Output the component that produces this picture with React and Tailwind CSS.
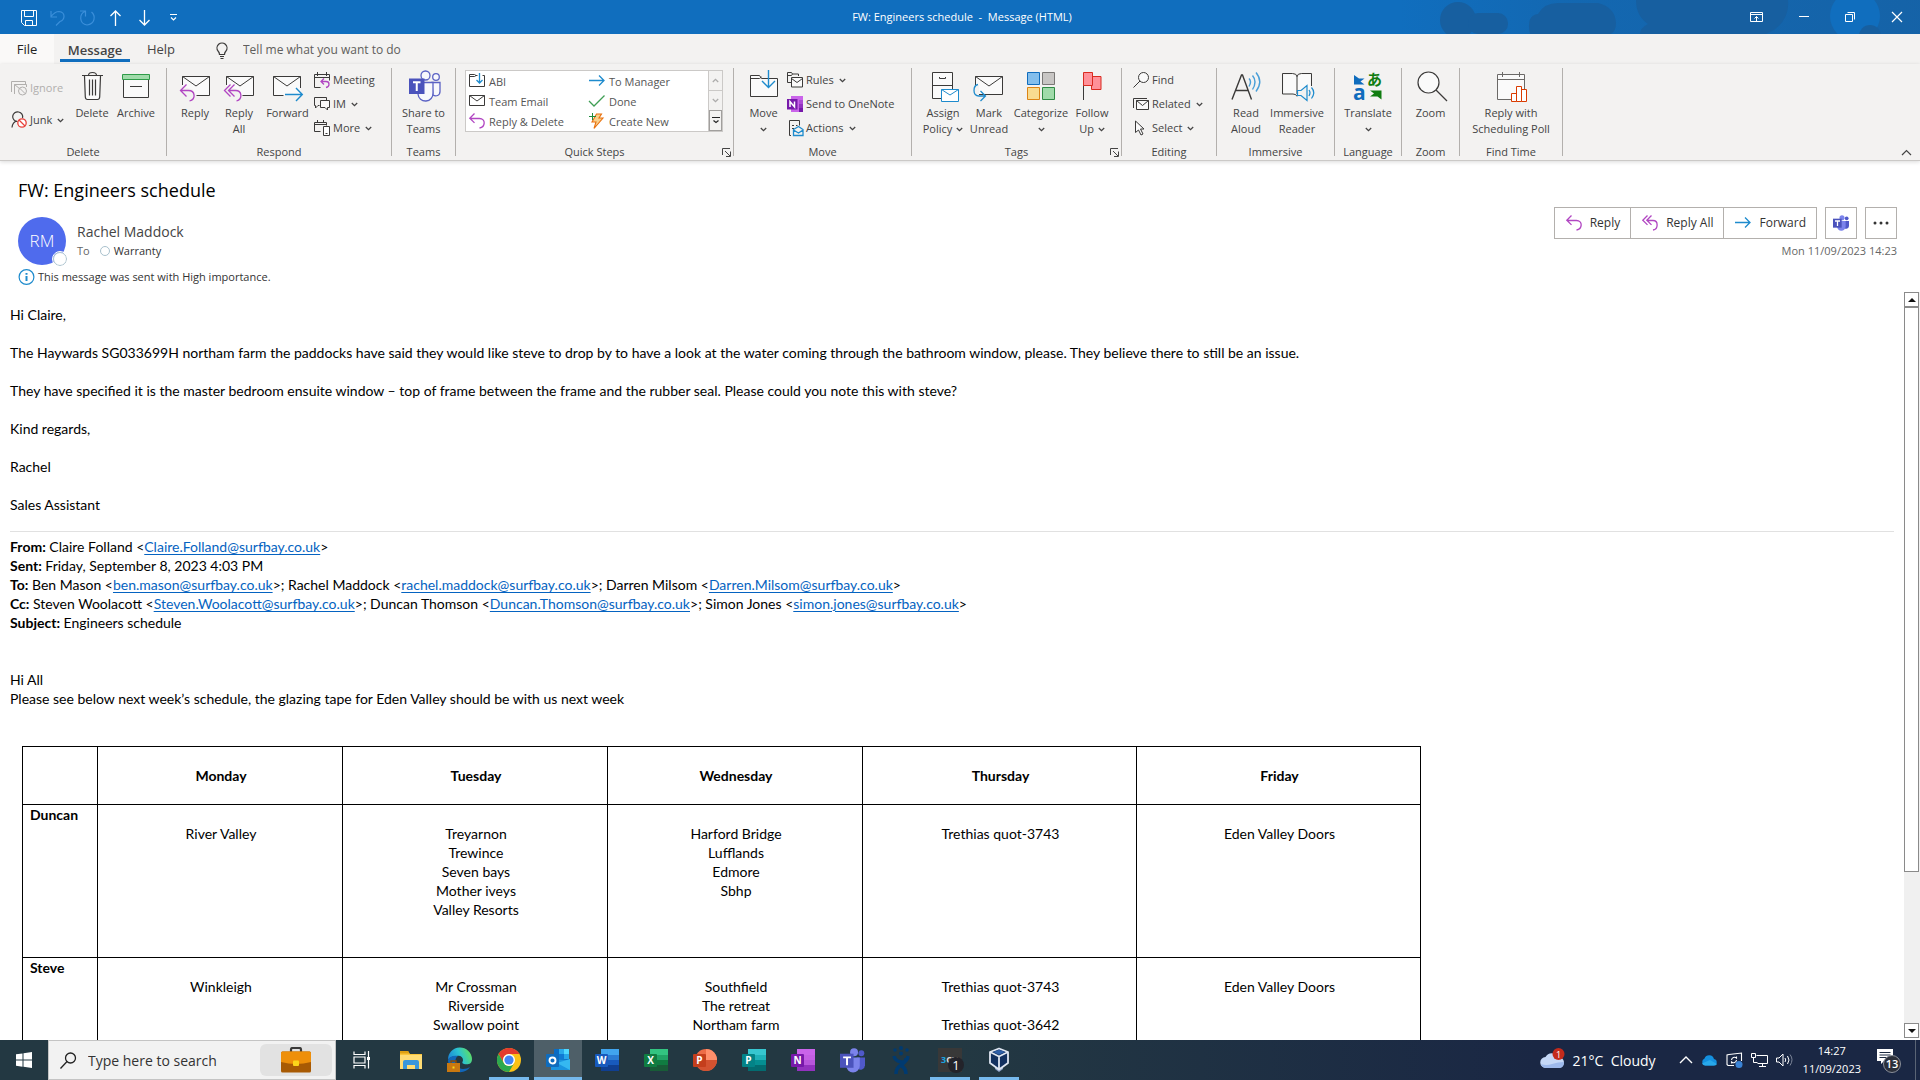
const INK = '#3b3a39';
const BLUE = '#1e8bcd';
const PURPLE = '#b146c2';

function Icon({ w = 32, h = w, className = '', children }) {
  return (
    <svg width={w} height={h} viewBox={`0 0 ${w} ${h}`} fill="none" stroke={INK} className={`shrink-0 overflow-visible ${className}`} aria-hidden="true">
      {children}
    </svg>
  );
}

const Chevron = ({ className = '' }) => (
  <svg width="7" height="5" viewBox="0 0 7 5" fill="none" stroke="#444" strokeWidth="1.3" className={`inline-block shrink-0 ${className}`} aria-hidden="true">
    <path d="M.8 1l2.7 2.6L6.2 1" />
  </svg>
);

/* ---------- ribbon icons, 32px ---------- */

const TrashIcon = () => (
  <Icon>
    <path d="M8.5 6.5l.8 20.5q.2 2.5 2.2 2.5h10q2 0 2.2-2.5l.8-20.5z" fill="#fafafa" stroke="none" />
    <path d="M6 5.500h21M12.500 5.500q0-3 4-3t4 3M8.500 6l.8 21q.2 2.500 2.200 2.500h10q2 0 2.200-2.500l.8-21M13.500 9.500v16M16.500 9.500v16M19.500 9.500v16" strokeWidth="1.2" />
  </Icon>
);
const ArchiveIcon = () => (
  <Icon>
    <path d="M3.5 9.5v18h25v-18z" fill="#fafafa" />
    <path d="M2.5 4.5h27v5h-27z" fill="#a0dbaa" stroke="#2e9b48" />
    <path d="M10 16.5h12" />
  </Icon>
);
const ReplyIcon = () => (
  <Icon>
    <path d="M3.5 6.5h27v19H17l-3-6-10.5-3z" fill="#fafafa" stroke="none" />
    <path d="M3.5 15V6.5h27v19H17.5M3.5 6.5L17 16l13.5-9.5" />
    <path d="M7.5 14.5l-6 6 6 6M2 20.5h7.5c6.5 0 8 8.5 1 10.5" stroke={PURPLE} strokeWidth="1.3" />
  </Icon>
);
const ReplyAllIcon = () => (
  <Icon>
    <path d="M3.5 6.5h27v19H19l-3-6-12.5-3z" fill="#fafafa" stroke="none" />
    <path d="M3.5 15V6.5h27v19H19.5M3.5 6.5L17 16l13.5-9.5" />
    <path d="M7.5 14.5l-6 6 6 6M11.5 14.5l-6 6 6 6M6 20.5h6.5c6.5 0 7.5 8.5 1 10.5" stroke={PURPLE} strokeWidth="1.3" />
  </Icon>
);
const ForwardIcon = () => (
  <Icon>
    <path d="M1.5 6.5h27v19h-27z" fill="#fafafa" stroke="none" />
    <path d="M11.5 25.5h-10v-19h27V18M1.5 6.5L15 16l13.5-9.5" />
    <path d="M13 24.5h17M24 18l6.3 6.5L24 31" stroke={BLUE} strokeWidth="1.4" />
  </Icon>
);
const TeamsOutlineIcon = () => (
  <Icon>
    <g stroke="#5b62c4" strokeWidth="1.3" fill="#f8f8fc">
      <path d="M24 12.5h8v9c0 4-4 5.5-7 3.5z" />
      <path d="M11 12.5h14v10.5a7.5 7.5 0 0 1-15 1z" />
      <circle cx="17.5" cy="5.5" r="4.5" />
      <circle cx="28" cy="7" r="3.3" />
    </g>
    <path d="M1 8.5h15.5v15.5H1z" fill="#4b53bc" stroke="none" />
    <path d="M5 12.200h7.500M8.750 12.500v8.500" stroke="#fff" strokeWidth="2" />
  </Icon>
);
const MoveIcon = () => (
  <Icon>
    <path d="M2.5 26.5V5.5h9l2 3h16v18z" fill="#fafafa" />
    <path d="M2.5 8.5h9l2-1.5" />
    <path d="M20.5 0v17M14 11l6.5 6.5L27 11" stroke={BLUE} strokeWidth="1.4" />
  </Icon>
);
const PolicyIcon = () => (
  <Icon>
    <path d="M5.5 2.5h20v26h-20z" fill="#fafafa" />
    <path d="M5.5 15.5h20M12.5 7v1.5h6V7" />
    <path d="M14.5 19.5h17v12h-17z" fill="#fff" stroke={BLUE} />
    <path d="M14.5 19.5l8.5 5.5 8.5-5.5" stroke={BLUE} />
  </Icon>
);
const UnreadIcon = () => (
  <Icon>
    <path d="M2.5 6.5h27v18h-27z" fill="#fafafa" />
    <path d="M2.5 6.5L16 16l13.5-9.5" />
    <path d="M0 15h6v13H0z" fill="#f3f2f1" stroke="none" />
    <path d="M5 14.5c-5 1-6 11 1 11.5h6M7.5 21l5 5-5 5" stroke={BLUE} strokeWidth="1.3" />
  </Icon>
);
const CategorizeIcon = () => (
  <Icon>
    <path d="M2.5 2.5h12v12h-12z" fill="#83beec" stroke="#0f6cbd" />
    <path d="M17.5 2.5h12v12h-12z" fill="#c8c6c4" stroke="#797775" />
    <path d="M2.5 17.5h12v12h-12z" fill="#f8db8f" stroke="#dc8414" />
    <path d="M17.5 17.5h12v12h-12z" fill="#a0dbaa" stroke="#2f8b45" />
  </Icon>
);
const FlagIcon = () => (
  <Icon>
    <path d="M7.5 3v27" />
    <path d="M15.5 6.5h9.5v13h-9.5z" fill="#ff9199" stroke="#d92b20" />
    <path d="M7.5 2.5h9v13h-9z" fill="#ff9199" stroke="#d92b20" />
  </Icon>
);
const ReadAloudIcon = () => (
  <Icon>
    <path d="M2 29.5L11.5 5h1L21.5 29.5M5.5 20.5h13" strokeWidth="1.4" />
    <g stroke="#4a9fd8" strokeWidth="1.4">
      <path d="M19 8.5q3 3 0 8M22.5 5.5q5 6 0 14M26 2.5q7.5 9 0 19" />
    </g>
  </Icon>
);
const ImmersiveIcon = () => (
  <Icon>
    <path d="M2.5 4.5h10q3 0 3.5 2 .5-2 3.5-2h10v14l-14 9q-1-2.5-4-3h-9z" fill="#fafafa" stroke="none" />
    <path d="M16 26.5q-.5-2.5-4-2.5H1.5V3.5h10q4 0 4.5 3 .5-3 4.5-3h10V16M16 6v18" />
    <path d="M16.5 20.5h3.5l6-5v15l-6-5h-3.5zM28 20q2 2.5 0 6M30.5 17.5q4.5 5 0 11" stroke={BLUE} fill="#f3f2f1" strokeWidth="1.2" />
  </Icon>
);
const TranslateIcon = () => (
  <Icon>
    <path d="M2 5l5 3.5h5.5l-4 3 4 3H2z" fill="#0f6cbd" stroke="none" />
    <path d="M29.5 29.5l-4-3h-7.5l4-3-4-3h11.5z" fill="#107c10" stroke="none" />
    <text x="1" y="29.5" fontSize="21" fontWeight="700" fill="#0f6cbd" stroke="none" fontFamily="Open Sans, sans-serif">a</text>
    <text x="15" y="15" fontSize="15" fontWeight="700" fill="#107c10" stroke="none" fontFamily="Noto Sans CJK JP, sans-serif">あ</text>
  </Icon>
);
const ZoomIcon = () => (
  <Icon>
    <circle cx="13.5" cy="12.5" r="10.5" fill="#fafafa" strokeWidth="1.2" />
    <path d="M21 20l11 11" strokeWidth="1.3" />
  </Icon>
);
const PollIcon = () => (
  <Icon>
    <path d="M2.5 4.5h27v25h-27z" fill="#fafafa" stroke="#6b6967" />
    <path d="M2.5 9.5h27M7.5 2v5M24.5 2v5" stroke="#6b6967" />
    <path d="M16.5 23.5h5v8h-5zM26.5 19.5h5v12h-5z" fill="#fff" stroke="#da3b01" />
    <path d="M21.5 16.5h5v15h-5z" fill="#fff" stroke="#da3b01" />
  </Icon>
);

/* ---------- ribbon icons, 16px ---------- */

const IgnoreIcon = () => (
  <Icon w={16}>
    <g stroke="#b1afad">
      <path d="M.5 12V1.5h14V4M3.5 14V4.5h12V7M3.5 4.5L9 9" />
      <circle cx="11.5" cy="11" r="4" fill="#f3f2f1" />
      <path d="M8.7 8.2l5.6 5.6" />
    </g>
  </Icon>
);
const JunkIcon = () => (
  <Icon w={16}>
    <path d="M1 15.5q.5-5.5 5-6.5M6.5 9.5a5 4.8 0 1 1 5-3.5" strokeWidth="1.2" />
    <circle cx="11" cy="11" r="4.2" fill="#fff" stroke="#e8403a" strokeWidth="1.3" />
    <path d="M8 8l6 6" stroke="#e8403a" strokeWidth="1.3" />
  </Icon>
);
const MeetingIcon = () => (
  <Icon w={16}>
    <path d="M6.5 15.5h-6v-13h15v6M.5 5.5h15M3.5 0v4M12.5 0v4" />
    <path d="M10 6.5L7 9.5l3 3M7.5 9.5h4.5c4 0 4 5 0 6" stroke={PURPLE} strokeWidth="1.3" />
  </Icon>
);
const ImIcon = () => (
  <Icon w={16}>
    <path d="M5.5 9.5H4l-2.5 2.5V9.5h-1v-8h12V4" />
    <path d="M6.5 4.5h9v7h-2V14L11 11.5H6.5z" fill="#fafafa" />
  </Icon>
);
const MoreIcon = () => (
  <Icon w={16}>
    <path d="M6.5 11.5h-6v-9h12v3M.5 4.5h12M3.5 0v3M9.5 0v3" />
    <path d="M9.5 6.5h6v9h-6z" fill="#fff" />
    <path d="M11.5 13.5h2" />
  </Icon>
);
const StepMoveIcon = () => (
  <Icon w={16}>
    <path d="M7 2.5L5.5 1.5h-5v12h15v-11h-2M.5 3.5h5L7 2.5h1.5" />
    <path d="M10.5 0v10M7.5 7l3 3 3-3" stroke={BLUE} strokeWidth="1.3" />
  </Icon>
);
const StepMailIcon = () => (
  <Icon w={16}>
    <path d="M.5 2.5h15v10H.5z" fill="#fff" />
    <path d="M.5 2.5L8 8l7.5-5.5" />
  </Icon>
);
const BackArrow = () => (
  <Icon w={16}>
    <path d="M5.5.5L.8 5.2l4.7 4.7M1 5.5h9.5c6.5 0 6 8.5 0 9.5" stroke={PURPLE} strokeWidth="1.3" />
  </Icon>
);
const BackAllArrow = () => (
  <Icon w={16}>
    <path d="M5.5.5L.8 5.2l4.7 4.7M9.5.5L4.8 5.2l4.7 4.7M5 5.5h6c5.5 0 5.5 8.5 0 9.5" stroke={PURPLE} strokeWidth="1.3" />
  </Icon>
);
const RightArrow = () => (
  <Icon w={16}>
    <path d="M0 7.5h15M10 2.5l5 5-5 5" stroke={BLUE} strokeWidth="1.3" />
  </Icon>
);
const DoneIcon = () => (
  <Icon w={16}>
    <path d="M0 8l5 5L15.5 2.5" stroke="#3f9e54" strokeWidth="1.3" />
  </Icon>
);
const BoltIcon = () => (
  <Icon w={16}>
    <path d="M7.5 1h5l-2.5 4h4L5 15.5l2-6.5H3z" fill="#f9d08b" stroke="#e8700f" strokeWidth="1.1" />
    <path d="M0 3.5h7M3.5 0v7" stroke="#1f8b3b" />
  </Icon>
);
const RulesIcon = () => (
  <Icon w={16}>
    <path d="M4 10.5H.5V.5h4l1 1.5h6v2M.5 3.5h4l1-1.5" />
    <path d="M4.5 5.5h11v9.500h-11z" fill="#fafafa" />
    <path d="M4.5 6.5l5.5 4 5.5-4" />
  </Icon>
);
const OneNoteIcon = () => (
  <Icon w={16}>
    <path d="M4 0h12v16H4z" fill="#ca64ea" stroke="none" />
    <path d="M12 4h4v4h-4z" fill="#ae4bd5" stroke="none" />
    <path d="M12 8h4v4h-4z" fill="#9332bf" stroke="none" />
    <path d="M12 12h4v4h-4z" fill="#7719aa" stroke="none" />
    <path d="M0 3h10.5v10.5H0z" fill="#7719aa" stroke="none" />
    <path d="M3 11V5.5L7.5 11V5.5" stroke="#fff" strokeWidth="1.5" />
  </Icon>
);
const ActionsIcon = () => (
  <Icon w={16}>
    <path d="M4 15.5H2.5V.5h10v5M5 5.5h2M5 8.5h2M9 5.5h1.5" />
    <path d="M6.5 15.5v-6l5-3 4.5 3v6zM6.5 10l5 3 4.5-3" fill="#f3f2f1" stroke={BLUE} strokeWidth="1.3" />
  </Icon>
);
const FindIcon = () => (
  <Icon w={16}>
    <circle cx="10.5" cy="5.5" r="5" fill="#fafafa" />
    <path d="M7 9L.5 15.5" />
  </Icon>
);
const RelatedIcon = () => (
  <Icon w={16}>
    <path d="M.5 12V2.5H14" />
    <path d="M3.5 4.5h12v9h-12z" fill="#fafafa" />
    <path d="M3.5 4.5l6 5 6-5" />
  </Icon>
);
const CursorIcon = () => (
  <Icon w={16}>
    <path d="M2.5 1v11.5l3-2.5 2.5 5 2-1-2.5-5H11z" fill="#fafafa" />
  </Icon>
);
const Launcher = () => (
  <svg width="10" height="9" viewBox="0 0 10 9" fill="none" stroke="#444" aria-hidden="true">
    <path d="M.5 7V.5H8M3 3l5 5M8.5 3.5v5H4" />
  </svg>
);

/* ---------- ribbon pieces ---------- */

function Group({ label, className, launcher, children }) {
  return (
    <>
      <section className={`flex h-24 shrink-0 flex-col pt-1 ${className}`} aria-label={label}>
        <div className="flex grow">{children}</div>
        <div className="relative flex h-4 items-center justify-center text-[11px] leading-4 text-[#444]">
          {label}
          {launcher && (
            <button type="button" aria-label={`${label} settings`} className="absolute right-px top-1">
              <Launcher />
            </button>
          )}
        </div>
      </section>
      <div className="mt-1 h-[88px] w-px shrink-0 bg-[#b3b0ad]" />
    </>
  );
}

function Big({ icon: I, lines, drop, className }) {
  return (
    <button type="button" className={`flex shrink-0 flex-col items-center pt-0.5 text-[11px] leading-4 whitespace-nowrap text-[#444] ${className}`}>
      <I />
      <span className="mt-[3px]">{lines[0]}</span>
      {(lines[1] || drop) && (
        <span className="flex h-4 items-center gap-1">
          {lines[1]}
          {drop && <Chevron />}
        </span>
      )}
    </button>
  );
}

function Small({ icon: I, label, drop, disabled, className = 'h-6' }) {
  return (
    <button type="button" disabled={disabled} className={`flex items-center gap-[3px] text-[11px] leading-4 whitespace-nowrap ${disabled ? 'text-[#b1afad]' : 'text-[#444]'} ${className}`}>
      <I />
      {label}
      {drop && <Chevron className="ml-0.5" />}
    </button>
  );
}

const steps = [
  [StepMoveIcon, 'ABI'],
  [RightArrow, 'To Manager'],
  [StepMailIcon, 'Team Email'],
  [DoneIcon, 'Done'],
  [BackArrow, 'Reply & Delete'],
  [BoltIcon, 'Create New'],
];

function Ribbon() {
  return (
    <div className="relative z-10 flex shrink-0 border-b border-[#cbc9c7] bg-[#f3f2f1] shadow-[0_1px_4px_rgba(0,0,0,0.15)]">
      <Group label="Delete" className="w-[166px]">
        <div className="ml-[11px] flex w-[61px] flex-col">
          <Small icon={IgnoreIcon} label="Ignore" disabled className="h-10" />
          <Small icon={JunkIcon} label="Junk" drop />
        </div>
        <Big icon={TrashIcon} lines={['Delete']} className="w-10" />
        <Big icon={ArchiveIcon} lines={['Archive']} className="ml-0.5 w-11" />
      </Group>
      <Group label="Respond" className="w-[224px]">
        <Big icon={ReplyIcon} lines={['Reply']} className="ml-1.5 w-11" />
        <Big icon={ReplyAllIcon} lines={['Reply', 'All']} className="w-11" />
        <Big icon={ForwardIcon} lines={['Forward']} className="w-[53px]" />
        <div className="flex flex-col">
          <Small icon={MeetingIcon} label="Meeting" />
          <Small icon={ImIcon} label="IM" drop />
          <Small icon={MoreIcon} label="More" drop />
        </div>
      </Group>
      <Group label="Teams" className="w-[63px]">
        <Big icon={TeamsOutlineIcon} lines={['Share to', 'Teams']} className="w-full" />
      </Group>
      <Group label="Quick Steps" launcher className="w-[277px]">
        <div className="mt-0.5 ml-[9px] flex h-[62px] w-[258px] border border-[#cbc9c7] bg-white">
          <div className="grid grow grid-cols-[120px_1fr] pl-[3px]">
            {steps.map(([I, label]) => (
              <button key={label} type="button" className="flex h-5 items-center gap-1 text-[11px] leading-5 whitespace-nowrap text-[#555]">
                <I />
                <span className="pt-0.5">{label}</span>
              </button>
            ))}
          </div>
          <div className="flex w-[14px] flex-col border-l border-[#cbc9c7] bg-[#f3f2f1]">
            <button type="button" aria-label="Previous steps" className="flex h-5 items-center justify-center border-b border-[#cbc9c7]">
              <Chevron className="rotate-180 opacity-40" />
            </button>
            <button type="button" aria-label="Next steps" className="flex grow items-center justify-center">
              <Chevron className="opacity-40" />
            </button>
            <button type="button" aria-label="All steps" className="flex h-[21px] items-center justify-center border border-[#a19f9d]">
              <svg width="8" height="7" viewBox="0 0 8 7" fill="none" stroke="#222"><path d="M0 .5h8M1.500 3.500L4 5.500l2.500-2" strokeWidth="1.2" /></svg>
            </button>
          </div>
        </div>
      </Group>
      <Group label="Move" className="w-[177px]">
        <Big icon={MoveIcon} lines={['Move']} drop className="ml-1.5 w-[47px]" />
        <div className="flex flex-col">
          <Small icon={RulesIcon} label="Rules" drop />
          <Small icon={OneNoteIcon} label="Send to OneNote" />
          <Small icon={ActionsIcon} label="Actions" drop />
        </div>
      </Group>
      <Group label="Tags" launcher className="w-[209px]">
        <Big icon={PolicyIcon} lines={['Assign', 'Policy']} drop className="ml-2 w-[46px]" />
        <Big icon={UnreadIcon} lines={['Mark', 'Unread']} className="w-[46px]" />
        <Big icon={CategorizeIcon} lines={['Categorize']} drop className="w-[58px]" />
        <Big icon={FlagIcon} lines={['Follow', 'Up']} drop className="w-[44px]" />
      </Group>
      <Group label="Editing" className="w-[94px]">
        <div className="ml-[11px] flex flex-col">
          <Small icon={FindIcon} label="Find" />
          <Small icon={RelatedIcon} label="Related" drop />
          <Small icon={CursorIcon} label="Select" drop />
        </div>
      </Group>
      <Group label="Immersive" className="w-[117px]">
        <Big icon={ReadAloudIcon} lines={['Read', 'Aloud']} className="ml-1.5 w-[46px]" />
        <Big icon={ImmersiveIcon} lines={['Immersive', 'Reader']} className="w-14" />
      </Group>
      <Group label="Language" className="w-[66px]">
        <Big icon={TranslateIcon} lines={['Translate']} drop className="w-full" />
      </Group>
      <Group label="Zoom" className="w-[57px]">
        <Big icon={ZoomIcon} lines={['Zoom']} className="w-full" />
      </Group>
      <Group label="Find Time" className="w-[102px]">
        <Big icon={PollIcon} lines={['Reply with', 'Scheduling Poll']} className="w-full" />
      </Group>
      <button type="button" aria-label="Collapse the ribbon" className="mr-2 mb-1 ml-auto self-end">
        <svg width="11" height="7" viewBox="0 0 11 7" fill="none" stroke="#444" strokeWidth="1.2"><path d="M1 6l4.500-4.500L10 6" /></svg>
      </button>
    </div>
  );
}

function TitleBar() {
  return (
    <header className="relative flex h-[34px] shrink-0 items-center overflow-hidden bg-[#106ebe] text-white">
      <svg width="520" height="34" className="absolute right-0 top-0" fill="#175fa0" aria-hidden="true">
        <defs>
          <linearGradient id="haze">
            <stop offset="0" stopColor="#175fa0" stopOpacity="0" />
            <stop offset=".35" stopColor="#175fa0" stopOpacity=".45" />
            <stop offset="1" stopColor="#175fa0" stopOpacity=".75" />
          </linearGradient>
        </defs>
        <path d="M0 0h520v34H0z" fill="url(#haze)" />
        <circle cx="58" cy="20" r="18" />
        <rect x="68" y="13" width="40" height="21" rx="10" />
        <path d="M130 34q-4-19 8-20 6-11 20-11h40q17 4 18 20 0 8-5 11z" />
        <path d="M236 0h152q2 18-14 30l-8 4H240q0-6 8-10-12-8-12-24z" />
        <circle cx="455" cy="16" r="25" fill="#106ebe" />
        <circle cx="470" cy="36" r="11" />
      </svg>
      <div className="relative z-10 flex grow basis-0 items-center gap-[13px] pt-0.5 pl-[21px]">
        <button type="button" aria-label="Save">
          <Icon w={16}><path d="M.5.5h15v15h-12l-3-3zM3.500.5v6h9v-6M4.500 15.500v-5h7v5" stroke="#fff" /></Icon>
        </button>
        <button type="button" aria-label="Undo" disabled>
          <Icon w={16}><path d="M1 1v6h6M1 6.500Q5 1.500 9 1.500c7 1 6 8 1 10l-4 4" stroke="#3b8fda" strokeWidth="1.2" /></Icon>
        </button>
        <button type="button" aria-label="Redo" disabled>
          <Icon w={16}><path d="M1 1h5.500v5.500M6 1.500C0 4 0 14 8 15c8-1 9-9 4.500-13" stroke="#3b8fda" strokeWidth="1.2" /></Icon>
        </button>
        <button type="button" aria-label="Previous item">
          <Icon w={16}><path d="M7.500 16V1M2.500 6l5-5 5 5" stroke="#fff" strokeWidth="1.3" /></Icon>
        </button>
        <button type="button" aria-label="Next item">
          <Icon w={16}><path d="M7.500 0v15M2.500 10l5 5 5-5" stroke="#fff" strokeWidth="1.3" /></Icon>
        </button>
        <button type="button" aria-label="Customize toolbar">
          <Icon w={16} h={8}><path d="M4 .5h7M5 3.500l2.500 2.500L10 3.500" stroke="#fff" strokeWidth="1.2" /></Icon>
        </button>
      </div>
      <h1 className="relative pt-px text-[11px] whitespace-pre">FW: Engineers schedule  -  Message (HTML)</h1>
      <div className="relative flex grow basis-0 items-center justify-end gap-9 pr-[17px]">
        <button type="button" aria-label="Ribbon display options">
          <Icon w={13} h={10}><path d="M.5.5h12v9H.5zM.5 2.500h12M6.500 9V4.500M4.500 6.500l2-2 2 2" stroke="#fff" /></Icon>
        </button>
        <button type="button" aria-label="Minimize">
          <Icon w={10} h={10}><path d="M0 4.500h10" stroke="#fff" /></Icon>
        </button>
        <button type="button" aria-label="Restore">
          <Icon w={10} h={10}><path d="M.5 2.500h7v7h-7zM2.500.5h7v7" stroke="#fff" /></Icon>
        </button>
        <button type="button" aria-label="Close">
          <Icon w={12} h={10}><path d="M1 0l10 10M11 0L1 10" stroke="#fff" strokeWidth="1.2" /></Icon>
        </button>
      </div>
    </header>
  );
}

function Tabs() {
  return (
    <nav className="flex h-[30px] shrink-0 items-stretch bg-[#f3f2f1] text-[13px] text-[#444]">
      <button type="button" className="w-[54px] bg-[#faf9f8] pt-0.5 font-medium text-[#222]">File</button>
      <button type="button" className="ml-1.5 flex w-[70px] flex-col items-center justify-between font-semibold">
        <span className="pt-[7px] leading-[18px]">Message</span>
        <span className="mb-[2px] h-[3px] w-full shrink-0 bg-[#106ebe]" />
      </button>
      <button type="button" className="ml-[14px] w-[34px] pt-0.5">Help</button>
      <label className="ml-[38px] flex items-center gap-[15px] pt-0.5">
        <Icon w={12} h={17}>
          <path d="M3.500 12.500q0-2-1.500-3.500a5 5 0 1 1 8 0q-1.500 1.500-1.500 3.500zM4 14.500h4M4.500 16.500h3" strokeWidth="1.2" />
        </Icon>
        <input type="text" placeholder="Tell me what you want to do" aria-label="Tell me what you want to do" className="w-60 bg-transparent text-[12px] outline-none placeholder:text-[#605e5c]" />
      </label>
    </nav>
  );
}

/* ---------- message ---------- */

const TeamsGlyph = ({ size = 16 }) => (
  <svg width={size} height={size} viewBox="0 0 24 24" aria-hidden="true" className="shrink-0">
    <circle cx="20.5" cy="5" r="2.8" fill="#5059c9" />
    <path d="M16 9h8v7.500a4.500 4.500 0 0 1-7 3.500z" fill="#5059c9" />
    <circle cx="13.5" cy="4" r="3.8" fill="#7b83eb" />
    <path d="M7 9h12v8a6.500 6.500 0 0 1-13 0z" fill="#7b83eb" />
    <path d="M0 5.500h13v13.500H0z" fill="#4b53bc" />
    <path d="M3 9h7.500M6.750 9v7.500" stroke="#fff" strokeWidth="1.9" />
  </svg>
);

function MessageHeader() {
  const action = 'flex h-8 items-center gap-2 border border-[#b3b0ad] text-[12px] text-[#333]';
  return (
    <div className="flex shrink-0 justify-between pr-[23px] pb-[7px] pl-[18px]">
      <div>
        <h2 className="mt-4 text-[18px] leading-[26px] text-black">FW: Engineers schedule</h2>
        <div className="mt-[14px] flex gap-[11px]">
          <div className="relative flex size-12 items-center justify-center rounded-full bg-[#4f6bed] text-[17px] font-light text-white">
            RM
            <span className="absolute right-[-1px] bottom-[-1px] size-[14px] rounded-full border border-[#a9c1cd] bg-white outline outline-white" />
          </div>
          <div className="pt-1.5">
            <p className="text-[14px] leading-[18px] text-[#444]">Rachel Maddock</p>
            <p className="mt-0.5 flex items-center text-[11px] leading-4 text-[#666]">
              To <span className="mr-1 ml-[10px] size-[10px] rounded-full border border-[#a9c1cd]" /> <span className="text-[#333]">Warranty</span>
            </p>
          </div>
        </div>
        <p className="mt-1 flex items-center gap-[3px] text-[11px] leading-4 text-[#333]">
          <Icon w={17} h={16}>
            <circle cx="8.5" cy="8" r="7.4" stroke={BLUE} strokeWidth="1.2" />
            <path d="M8.500 7v5M8.500 4v1.800" stroke={BLUE} strokeWidth="2" />
          </Icon>
          This message was sent with High importance.
        </p>
      </div>
      <div className="flex flex-col items-end pt-[46px]">
        <div className="flex">
          <button type="button" className={`${action} pr-[10px] pl-[11px]`}><BackArrow />Reply</button>
          <button type="button" className={`${action} -ml-px pr-[10px] pl-[11px]`}><BackAllArrow />Reply All</button>
          <button type="button" className={`${action} -ml-px pr-[10px] pl-[11px]`}><RightArrow />Forward</button>
          <button type="button" aria-label="Share to Teams" className={`${action} ml-2 w-8 justify-center`}><TeamsGlyph /></button>
          <button type="button" aria-label="More actions" className={`${action} ml-2 w-8 justify-center`}>
            <svg width="16" height="4" fill="#333"><circle cx="2" cy="2" r="1.5" /><circle cx="8" cy="2" r="1.5" /><circle cx="14" cy="2" r="1.5" /></svg>
          </button>
        </div>
        <p className="mt-1 text-[11px] leading-4 text-[#666]">Mon 11/09/2023 14:23</p>
      </div>
    </div>
  );
}

const Mail = ({ to }) => (
  <>&lt;<a href={`mailto:${to}`} className="text-[#0563c1] underline underline-offset-2">{to}</a>&gt;</>
);

const days = ['Monday', 'Tuesday', 'Wednesday', 'Thursday', 'Friday'];
const schedule = [
  ['Duncan', [
    ['River Valley'],
    ['Treyarnon', 'Trewince', 'Seven bays', 'Mother iveys', 'Valley Resorts'],
    ['Harford Bridge', 'Lufflands', 'Edmore', 'Sbhp'],
    ['Trethias quot-3743'],
    ['Eden Valley Doors'],
  ]],
  ['Steve', [
    ['Winkleigh'],
    ['Mr Crossman', 'Riverside', 'Swallow point'],
    ['Southfield', 'The retreat', 'Northam farm'],
    ['Trethias quot-3743', '', 'Trethias quot-3642'],
    ['Eden Valley Doors'],
  ]],
];

function MessageBody() {
  return (
    <div className="flex min-h-0 grow">
      <article className="min-w-0 grow overflow-hidden pt-[13px] pr-[10px] pl-[10px] font-['Lato',sans-serif] text-[14px] leading-[19px] text-black">
        <div className="space-y-[19px]">
          <p>Hi Claire,</p>
          <p>The Haywards SG033699H northam farm the paddocks have said they would like steve to drop by to have a look at the water coming through the bathroom window, please. They believe there to still be an issue.</p>
          <p>They have specified it is the master bedroom ensuite window – top of frame between the frame and the rubber seal. Please could you note this with steve?</p>
          <p>Kind regards,</p>
          <p>Rachel</p>
          <p>Sales Assistant</p>
        </div>
        <div className="mt-[17px] border-t border-[#e1e1e1] pt-[5px]">
          <p><b>From:</b> Claire Folland <Mail to="Claire.Folland@surfbay.co.uk" /></p>
          <p><b>Sent:</b> Friday, September 8, 2023 4:03 PM</p>
          <p><b>To:</b> Ben Mason <Mail to="ben.mason@surfbay.co.uk" />; Rachel Maddock <Mail to="rachel.maddock@surfbay.co.uk" />; Darren Milsom <Mail to="Darren.Milsom@surfbay.co.uk" /></p>
          <p><b>Cc:</b> Steven Woolacott <Mail to="Steven.Woolacott@surfbay.co.uk" />; Duncan Thomson <Mail to="Duncan.Thomson@surfbay.co.uk" />; Simon Jones <Mail to="simon.jones@surfbay.co.uk" /></p>
          <p><b>Subject:</b> Engineers schedule</p>
        </div>
        <div className="mt-[38px]">
          <p>Hi All</p>
          <p>Please see below next week’s schedule, the glazing tape for Eden Valley should be with us next week</p>
        </div>
        <table className="mt-[38px] ml-3 w-[1399px] table-fixed border-collapse [&_td]:border [&_td]:border-black [&_th]:border [&_th]:border-black">
          <colgroup>
            <col className="w-[75px]" />
            <col className="w-[245px]" />
            <col className="w-[265px]" />
            <col className="w-[255px]" />
            <col className="w-[274px]" />
            <col />
          </colgroup>
          <thead>
            <tr className="h-[58px]">
              <td />
              {days.map((d) => <th key={d} scope="col" className="pl-0.5 font-bold">{d}</th>)}
            </tr>
          </thead>
          <tbody>
            {schedule.map(([name, cells]) => (
              <tr key={name} className="h-[153px] align-top">
                <th scope="row" className="pl-[7px] text-left font-bold">{name}</th>
                {cells.map((lines, i) => (
                  <td key={i} className="pt-[19px] pl-0.5 text-center">
                    {lines.map((l, j) => <p key={j} className="min-h-[19px]">{l}</p>)}
                  </td>
                ))}
              </tr>
            ))}
          </tbody>
        </table>
      </article>
      <div className="mb-0.5 flex w-4 shrink-0 flex-col bg-[#f0f0f0] pr-px">
        <button type="button" aria-label="Scroll up" className="flex h-[15px] shrink-0 items-center justify-center border border-[#8a8a8a] bg-white">
          <svg width="8" height="4" fill="#111"><path d="M4 0l4 4H0z" /></svg>
        </button>
        <div className="grow-[565] basis-0 border border-[#8a8a8a] bg-white" />
        <div className="grow-[151] basis-0" />
        <button type="button" aria-label="Scroll down" className="flex h-[15px] shrink-0 items-center justify-center border border-[#8a8a8a] bg-white">
          <svg width="8" height="4" fill="#111"><path d="M0 0h8L4 4z" /></svg>
        </button>
      </div>
    </div>
  );
}

/* ---------- taskbar ---------- */

function OfficeTile({ letter, dark, shades, round }) {
  return (
    <svg width="24" height="24" viewBox="0 0 24 24" aria-hidden="true">
      {round ? (
        <>
          <circle cx="13" cy="12" r="11" fill={shades[1]} />
          <path d="M13 1a11 11 0 0 1 11 11H13z" fill={shades[0]} />
          <path d="M2 12h22a11 11 0 0 1-22 0z" fill={shades[2]} />
        </>
      ) : (
        <>
          <path d="M6 1h18v6H6z" fill={shades[0]} />
          <path d="M6 7h18v5H6z" fill={shades[1]} />
          <path d="M6 12h18v5H6z" fill={shades[2]} />
          <path d="M6 17h18v6H6z" fill={shades[3]} />
        </>
      )}
      <rect x="0" y="6" width="13" height="13" rx="1" fill={dark} />
      <text x="6.5" y="16" textAnchor="middle" fontSize="10" fontWeight="700" fill="#fff" fontFamily="Open Sans, sans-serif">{letter}</text>
    </svg>
  );
}

const Briefcase = () => (
  <svg width="32" height="26" viewBox="0 0 32 26" aria-hidden="true">
    <path d="M11 5V2.500q0-1.500 1.500-1.500h7q1.500 0 1.500 1.500V5" fill="none" stroke="#3b3a39" strokeWidth="2.2" />
    <rect x="1" y="4.5" width="30" height="21" rx="1.5" fill="#a85a04" />
    <path d="M1 6q0-1.500 1.500-1.500h27q1.500 0 1.500 1.500v9q-15 4-30 0z" fill="#ee8f0a" />
    <rect x="13" y="13.5" width="6" height="5.5" rx="1" fill="#fbd51a" />
  </svg>
);

const apps = [
  ['Task View', (
    <svg width="18" height="18" viewBox="0 0 18 18" fill="none" stroke="#fff" strokeWidth="1.2">
      <path d="M1 .5v3h11v-3M1 6h11v6H1zM1 17.500v-3h11v3M15.500 0v17.500" />
      <path d="M14 6h3v3h-3z" fill="#fff" stroke="none" />
    </svg>
  )],
  ['File Explorer', (
    <svg width="24" height="24" viewBox="0 0 24 24">
      <path d="M1 3h8l2 3h12v15H1z" fill="#fbc53a" />
      <path d="M1 7h22v14H1z" fill="#ffdc74" />
      <path d="M1 3h8l1.500 2.500H1z" fill="#e0a112" />
      <path d="M4 21v-7q0-2 2-2h12q2 0 2 2v7h-4v-4H8v4z" fill="#3a97dc" />
    </svg>
  )],
  ['Microsoft Edge', (
    <svg width="26" height="26" viewBox="0 0 26 26">
      <defs>
        <linearGradient id="edge" x1="0" y1=".6" x2="1" y2=".3">
          <stop offset="0" stopColor="#1b86d6" />
          <stop offset=".5" stopColor="#2bc3d2" />
          <stop offset="1" stopColor="#62e05a" />
        </linearGradient>
      </defs>
      <path d="M1 13A12 12 0 0 1 25 12c0 5-4 6-8 5-3-1-1-2-1-4 0-3-3-5-6-4-5 0-8 2-9 4z" fill="url(#edge)" />
      <path d="M1 13c1-3 5-5 10-4-4 2-4 12 5 13 3 0 5-1 7-2-3 5-11 7-16 3-4-2-6-6-6-10z" fill="#1266b8" />
      <path d="M0 16h13v9H0z" fill="#c97810" />
      <path d="M4 16v-2h5v2" fill="none" stroke="#8b4c05" strokeWidth="1.4" />
      <path d="M5.500 19.500h2v2h-2z" fill="#fbd51a" />
    </svg>
  )],
  ['Google Chrome', (
    <svg width="24" height="24" viewBox="0 0 24 24">
      <circle cx="12" cy="12" r="12" fill="#fbc116" />
      <path d="M1.600 6A12 12 0 0 1 22.400 6H12a6 6 0 0 0-5.200 9z" fill="#e33b2e" />
      <path d="M1.600 6A12 12 0 0 0 12 24l5.200-9a6 6 0 0 1-10.400 0z" fill="#2da94f" />
      <circle cx="12" cy="12" r="6" fill="#fff" />
      <circle cx="12" cy="12" r="4.6" fill="#4285f4" />
    </svg>
  ), 'open'],
  ['Outlook', (
    <svg width="24" height="24" viewBox="0 0 24 24">
      <path d="M8 1h15v14H8z" fill="#0a6cc4" />
      <path d="M13 1h5v5h-5z" fill="#28a8ea" />
      <path d="M18 1h5v5h-5z" fill="#50d9ff" />
      <path d="M13 6h5v5h-5z" fill="#0f7ad4" />
      <path d="M18 6h5v5h-5z" fill="#28a8ea" />
      <path d="M5 11l19 1v10H5z" fill="#1a94e0" />
      <path d="M24 11v11L11 15z" fill="#35b8f1" />
      <rect y="6" width="13" height="13" rx="1" fill="#0f6cbd" />
      <circle cx="6.5" cy="12.5" r="3" fill="none" stroke="#fff" strokeWidth="1.9" />
    </svg>
  ), 'active'],
  ['Word', <OfficeTile letter="W" dark="#185abd" shades={['#41a5ee', '#2b7cd3', '#185abd', '#103f91']} />],
  ['Excel', <OfficeTile letter="X" dark="#107c41" shades={['#33c481', '#21a366', '#107c41', '#185c37']} />],
  ['PowerPoint', <OfficeTile round letter="P" dark="#c43e1c" shades={['#ff8f6b', '#ed6c47', '#d35230']} />],
  ['Publisher', <OfficeTile letter="P" dark="#038387" shades={['#37c6d0', '#1fb1b9', '#058f92', '#036c70']} />],
  ['OneNote', <OfficeTile letter="N" dark="#7719aa" shades={['#ca64ea', '#c45fe3', '#b856dc', '#9332bf']} />],
  ['Teams', <TeamsGlyph size={25} />],
  ['Figures', (
    <svg width="20" height="30" viewBox="0 0 20 30" fill="none" stroke="#003a70" strokeWidth="3.5">
      <path d="M3 11q1 5 7 6t7-6M5 29q0-6 5-9t5-7M15 29q0-5-4-8" />
      <g fill="#003a70" stroke="none">
        <circle cx="4" cy="5" r="1.8" />
        <circle cx="10" cy="3" r="2" />
        <circle cx="16" cy="5" r="1.8" />
        <circle cx="10" cy="8.5" r="2" />
      </g>
    </svg>
  )],
  ['3CX', (
    <svg width="28" height="30" viewBox="0 0 28 30" fontFamily="Open Sans, sans-serif">
      <path d="M2 3h24v24H2z" fill="#383838" />
      <text x="5" y="18" fontSize="9" fontWeight="700" fill="#1aa3e0">3<tspan fill="#ddd">CX</tspan></text>
      <circle cx="20" cy="20" r="8" fill="#23232a" />
      <text x="20" y="25" textAnchor="middle" fontSize="13" fill="#fff">1</text>
    </svg>
  ), 'open'],
  ['VirtualBox', (
    <svg width="22" height="26" viewBox="0 0 22 26" stroke="#dfe6f2" strokeWidth="1.8" strokeLinejoin="round">
      <path d="M7 22l4 3 4-3v-4H7z" fill="#8fa3c8" stroke="none" />
      <path d="M2 5l9-3.500L20 5v11l-9 6.500L2 16z" fill="#12305f" />
      <path d="M2 5l9 4.500L20 5M11 9.500v13" fill="none" />
      <path d="M5 5l6-2.200L17 5l-6 2.800z" fill="#2d5ea8" stroke="none" />
    </svg>
  ), 'open'],
];

function Taskbar() {
  return (
    <footer className="flex h-10 shrink-0 items-stretch bg-linear-to-r from-[#233842] from-50% to-[#1a2744] to-80% text-white">
      <button type="button" aria-label="Start" className="flex w-12 items-center justify-center">
        <svg width="16" height="16" viewBox="0 0 16 16" fill="#fff"><path d="M0 2.300L6.500 1.400v6.200H0zM7.500 1.200L16 0v7.600H7.500zM0 8.500h6.500v6.200L0 13.800zM7.500 8.500H16V16l-8.500-1.200z" /></svg>
      </button>
      <label className="flex w-72 items-center border border-[#c4c4c4] bg-[#f2f2f2] pr-[3px] pl-[11px]">
        <svg width="17" height="17" viewBox="0 0 17 17" fill="none" stroke="#222" strokeWidth="1.3"><circle cx="10.5" cy="6" r="5" /><path d="M7 9.500L.5 16.500" /></svg>
        <input type="search" placeholder="Type here to search" aria-label="Type here to search" className="ml-[11px] w-0 grow bg-transparent text-[14px] outline-none placeholder:text-[#333]" />
        <span className="flex h-8 w-[72px] items-center justify-center rounded-md bg-[#e2e2e2]"><Briefcase /></span>
      </label>
      <div className="flex gap-px pl-0.5">
        {apps.map(([name, art, state]) => (
          <button
            key={name}
            type="button"
            aria-label={name}
            className={`flex w-12 items-center justify-center ${state === 'active' ? 'border-b-[3px] border-[#76b9ed] bg-[#4e5f68] pt-[3px]' : ''} ${state === 'open' ? 'relative after:absolute after:inset-x-1 after:bottom-0 after:h-[3px] after:bg-[#76b9ed]' : ''}`}
          >
            {art}
          </button>
        ))}
      </div>
      <div className="ml-auto flex items-center">
        <button type="button" className="flex items-center gap-[7px] text-[14px] whitespace-pre">
          <svg width="26" height="24" viewBox="0 0 26 24">
            <path d="M6 20a5.500 5.500 0 0 1-.5-11A7 7 0 0 1 18 9a5.500 5.500 0 0 1 1 11z" fill="#c5d8f7" />
            <path d="M1 16q5 2 11 0t12-2q0 6-5 6H6q-4 0-5-4z" fill="#9db9ec" />
            <circle cx="18.5" cy="6" r="6" fill="#c42b1c" />
            <text x="18.5" y="9.5" textAnchor="middle" fontSize="9" fill="#fff" fontFamily="Open Sans, sans-serif">1</text>
          </svg>
          21°C  Cloudy
        </button>
        <div className="ml-[23px] flex items-center gap-2">
          <svg width="14" height="8" viewBox="0 0 14 8" fill="none" stroke="#fff" strokeWidth="1.4"><path d="M1 7l6-6 6 6" /></svg>
          <svg width="17" height="11" viewBox="0 0 17 11"><path d="M4 10.500a3.700 3.700 0 0 1-.5-7A5 5 0 0 1 13 4a3.300 3.300 0 0 1 0 6.500z" fill="#1490df" /><path d="M1 8.500L9 5l7 4q-1 1.500-3 1.500H4q-2 0-3-2z" fill="#28a8ea" /></svg>
          <svg width="17" height="16" viewBox="0 0 17 16" fill="none" stroke="#fff" strokeWidth="1.1"><path d="M2 13.500l-1-1V3l2-.5L15.500 1v8M2 13.500h6M5.500 8a3 3 0 0 1 5-2V4.500M10.500 8a3 3 0 0 1-5 2v1.500" /><circle cx="13" cy="12.5" r="3.5" fill="#3a83d6" stroke="none" /></svg>
          <svg width="17" height="14" viewBox="0 0 17 14" fill="none" stroke="#fff"><path d="M5.500 2.500h11v8h-10M8 13.500h7M11.500 10.500v3M.5.500h4v4h-4zM2.500 4.500v5M2.500 9.500h4" /></svg>
          <svg width="17" height="14" viewBox="0 0 17 14" fill="none" stroke="#fff"><path d="M.5 5v4h2.500l4 4V1L3 5zM9 5q1.500 2 0 4M11.500 3q3 4 0 8" /><path d="M14 1.500q4 5 0 11" stroke="#7d8699" /></svg>
        </div>
        <time className="ml-2.5 text-center text-[11px] leading-[18px]">14:27<br />11/09/2023</time>
        <button type="button" aria-label="13 notifications" className="ml-[15px] flex w-[27px] items-center">
          <svg width="27" height="26" viewBox="0 0 27 26">
            <path d="M1 2h16v12H8l-3 3v-3H1z" fill="#fff" />
            <path d="M3.500 5.500h11M3.500 8h11M3.500 10.500h11" stroke="#1b2940" />
            <circle cx="16" cy="17" r="8.5" fill="#2b2f3a" stroke="#8a8f99" />
            <text x="16" y="21" textAnchor="middle" fontSize="11" fontWeight="600" fill="#fff" fontFamily="Open Sans, sans-serif">13</text>
          </svg>
        </button>
        <span className="mr-1 ml-3 h-10 w-px bg-[#5a6475]" />
      </div>
    </footer>
  );
}

export default function App() {
  return (
    <div className="flex h-screen flex-col overflow-hidden bg-white font-['Open_Sans','Noto_Sans',sans-serif]">
      <TitleBar />
      <Tabs />
      <Ribbon />
      <MessageHeader />
      <MessageBody />
      <Taskbar />
    </div>
  );
}
